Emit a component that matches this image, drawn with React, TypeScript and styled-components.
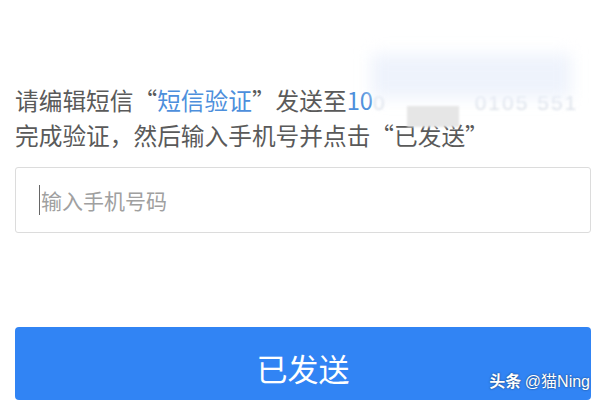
import React from "react";
import styled, { createGlobalStyle } from "styled-components";

const Global = createGlobalStyle`
  html, body { margin: 0; padding: 0; background: #fff; }
  body { width: 600px; height: 400px; overflow: hidden; }
`;

const Page = styled.div`
  position: relative;
  box-sizing: border-box;
  width: 600px;
  height: 400px;
  padding: 84px 10px 0 15px;
  font-family: "Noto Sans CJK SC", "Noto Sans", sans-serif;
  display: flex;
  flex-direction: column;
`;

const Hint = styled.p`
  margin: 0;
  height: 66px;
  font-size: 23.7px;
  line-height: 33px;
  color: #5a5a5a;
  white-space: nowrap;
  position: relative;
`;

const Link = styled.span`
  color: #4d8fdc;
`;

const Faded = styled.span<{ $gap: number }>`
  color: #dde2ea;
  filter: blur(1.2px);
  margin-left: ${p => p.$gap}px;
  letter-spacing: 2px;
  font-family: "Liberation Sans", sans-serif;
  font-size: 21px;
`;

const BlurPatch = styled.span<{ $l: number; $t: number; $w: number; $h: number; $c: string; $b: number }>`
  position: absolute;
  left: ${p => p.$l}px;
  top: ${p => p.$t}px;
  width: ${p => p.$w}px;
  height: ${p => p.$h}px;
  background: ${p => p.$c};
  filter: blur(${p => p.$b}px);
`;

const Input = styled.div`
  box-sizing: border-box;
  margin-top: 17px;
  height: 70px;
  width: 576px;
  border: 1px solid #dcdcdc;
  border-radius: 3px;
  display: flex;
  align-items: center;
  padding-left: 23px;
  font-size: 21px;
  color: #a0a0a0;
`;

const Caret = styled.span`
  display: inline-block;
  width: 1px;
  height: 30px;
  background: #666;
  margin-right: 1px;
`;

const Button = styled.div`
  margin-top: 94px;
  height: 76px;
  width: 576px;
  border-radius: 4px;
  background: #3184f4;
  color: #fff;
  font-size: 31px;
  display: flex;
  justify-content: center;
  padding-top: 18px;
  box-sizing: border-box;
`;

const Mark = styled.div`
  position: absolute;
  right: 10px;
  bottom: 8px;
  color: #fff;
  font-family: "Noto Sans CJK SC", sans-serif;
  font-size: 16px;
  font-weight: 700;
  text-shadow: 0 0 2px rgba(0,0,0,0.6);
`;

const MarkName = styled.span`
  font-family: "Liberation Sans", "Noto Sans CJK SC", sans-serif;
  font-weight: 400;
`;

export default function App() {
  return (
    <>
      <Global />
      <Page>
        <Hint>
          请编辑短信“<Link>短信验证</Link>”发送至<Link>10</Link>
          <Faded $gap={0}>0</Faded>
          <Faded $gap={88}>0105 551</Faded>
          <BlurPatch $l={356} $t={-30} $w={200} $h={44} $c="#eef3fc" $b={8} />
          <BlurPatch $l={392} $t={22} $w={52} $h={21} $c="#e6e6e6" $b={1} />
          <br />
          完成验证，然后输入手机号并点击“已发送”
        </Hint>
        <Input>
          <Caret />
          输入手机号码
        </Input>
        <Button>已发送</Button>
        <Mark>
          头条 <MarkName>@猫Ning</MarkName>
        </Mark>
      </Page>
    </>
  );
}
